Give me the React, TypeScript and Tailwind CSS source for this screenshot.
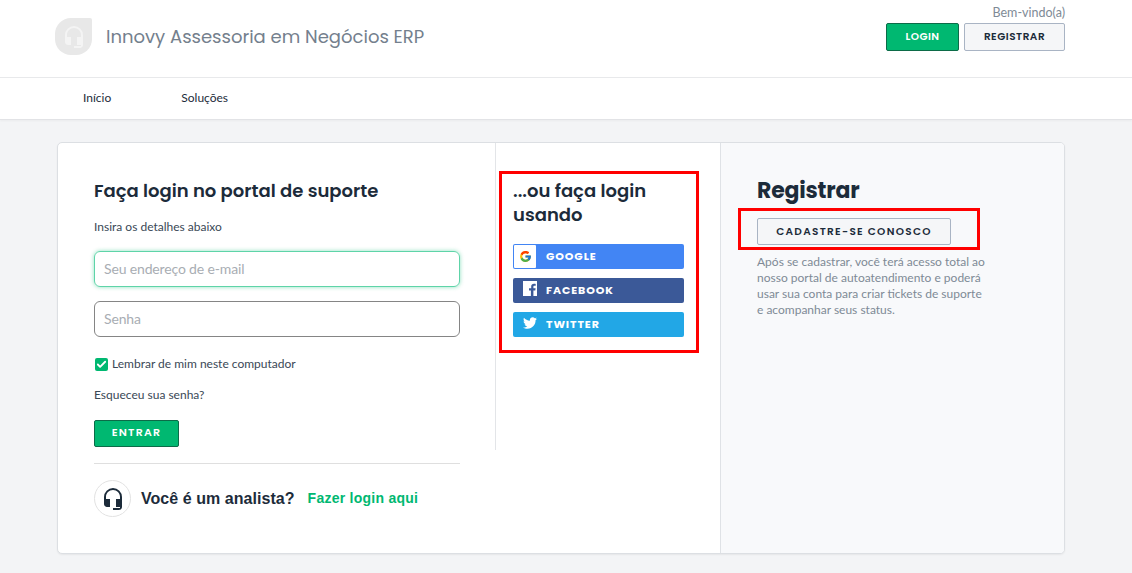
import { FaTwitter } from 'react-icons/fa';
import { FcGoogle } from 'react-icons/fc';
import { MdHeadsetMic } from 'react-icons/md';
import { Check } from 'lucide-react';

const heading = "font-['Poppins','Inter','Liberation_Sans',sans-serif]";
const body = "font-['Source_Sans_Pro','Lato','Noto_Sans',sans-serif]";

function SocialButton({ label, color, icon }: { label: string; color: string; icon: React.ReactNode }) {
  return (
    <div className={`flex h-[25px] items-center rounded-[2px] ${color}`}>
      <div className="flex w-[33px] shrink-0 justify-center">{icon}</div>
      <span className="pb-[1px] text-[11px] font-bold tracking-[0.9px] text-white">{label}</span>
    </div>
  );
}

function FacebookIcon() {
  return (
    <svg viewBox="0 0 14 15" className="mb-[4px] h-[15px] w-[14px]">
      <path fill="#fff" d="M0 0h14v15h-3.6V9.4h1.9l.3-2.2h-2.2V5.8c0-.6.2-1 1.1-1h1.2V2.9c-.2 0-.9-.1-1.7-.1-1.7 0-2.8 1-2.8 2.8v1.6H6v2.2h1.9V15H0z" />
    </svg>
  );
}

export default function App() {
  return (
    <div className={`relative min-h-[573px] overflow-hidden bg-[#f3f4f6] text-[#1c2b3a] ${body}`}>
      <header className="flex h-[78px] items-start justify-between border-b border-[#e8e9eb] bg-white pl-[55px] pr-[67px]">
        <div className="flex items-center pt-[18px]">
          <div className="flex h-[37px] w-[37px] items-center justify-center rounded-[16px] rounded-tr-[2px] bg-[#e8e8e8]">
            <MdHeadsetMic className="h-[24px] w-[24px] text-[#f4f4f4]" />
          </div>
          <span className={`ml-[14px] text-[18px] leading-[37px] text-[#74808d] ${heading}`}>
            Innovy Assessoria em Negócios ERP
          </span>
        </div>
        <div className="flex flex-col items-end pt-[4px]">
          <span className="text-[12.5px] leading-[17px] text-[#7e8a96]">Bem-vindo(a)</span>
          <div className="mt-[2px] flex gap-[5px]">
            <button className={`h-[28px] w-[73px] rounded-[2px] border border-[#0c6b48] bg-[#00b871] text-[10.5px] font-semibold tracking-[0.4px] text-white ${heading}`}>
              LOGIN
            </button>
            <button className={`h-[28px] w-[101px] rounded-[2px] border border-[#a9b4c4] bg-[#f5f6f8] text-[10.5px] font-semibold tracking-[0.5px] text-[#1c2b3a] ${heading}`}>
              REGISTRAR
            </button>
          </div>
        </div>
      </header>

      <nav className="flex h-[42px] items-center gap-[70px] border-b border-[#e2e3e6] bg-white pb-[1px] pl-[83px] text-[12px] shadow-[0_1px_2px_rgba(0,0,0,0.04)]">
        <span>Início</span>
        <span>Soluções</span>
      </nav>

      <main className="mx-[57px] mt-[22px] flex h-[412px] w-[1008px] overflow-hidden rounded-[5px] border border-[#dcdfe3] bg-white shadow-[0_1px_2px_rgba(0,0,0,0.06)]">
        <section className="flex w-[662px] shrink-0 pl-[36px]">
          <div className="w-[366px] shrink-0 pt-[34px]">
            <h2 className={`text-[18px] font-semibold leading-[28px] ${heading}`}>Faça login no portal de suporte</h2>
            <p className="mt-[13px] text-[12px] leading-[18px] text-[#3a4856]">Insira os detalhes abaixo</p>
            <div className="mt-[15px] flex h-[36px] items-center rounded-[6px] border border-[#5ed4a8] px-[9px] pb-[1px] text-[14px] tracking-[-0.15px] text-[#a8adb3] shadow-[0_0_4px_rgba(0,184,113,0.45)]">
              Seu endereço de e-mail
            </div>
            <div className="mt-[14px] flex h-[36px] items-center rounded-[6px] border border-[#858585] px-[9px] pb-[1px] text-[14px] tracking-[-0.15px] text-[#a8adb3]">
              Senha
            </div>
            <label className="mt-[18px] flex items-center text-[12px] leading-[18px] text-[#3a4856]">
              <span className="ml-[1px] flex h-[13px] w-[13px] items-center justify-center rounded-[2px] bg-[#00b871]">
                <Check className="h-[11px] w-[11px] text-white" strokeWidth={4} />
              </span>
              <span className="ml-[4px]">Lembrar de mim neste computador</span>
            </label>
            <p className="mt-[13px] text-[12px] leading-[18px] text-[#3a4856]">Esqueceu sua senha?</p>
            <button className={`mt-[16px] block h-[27px] w-[85px] rounded-[2px] border border-[#0c6b48] bg-[#00b871] pb-[2px] text-[11px] font-semibold tracking-[1.2px] text-white ${heading}`}>
              ENTRAR
            </button>
            <div className="mt-[16px] border-t border-[#dfdfdf]" />
            <div className="mt-[16px] flex items-center">
              <div className="flex h-[37px] w-[37px] items-center justify-center rounded-full border border-[#e2e2e2]">
                <MdHeadsetMic className="h-[24px] w-[24px] text-[#1c2b3a]" />
              </div>
              <span className="ml-[10px] font-['Liberation_Sans',sans-serif] text-[16px] font-bold tracking-[0.05px] text-[#1c2b3a]">Você é um analista?</span>
              <span className="ml-[13px] font-['Liberation_Sans',sans-serif] text-[14px] font-bold tracking-[0.25px] text-[#00b871]">Fazer login aqui</span>
            </div>
          </div>
          <div className="ml-[35px] h-[307px] w-[205px] shrink-0 border-l border-[#e3e5e8] pl-[17px] pr-[16px] pt-[36px]">
            <h2 className={`text-[18px] font-semibold leading-[24px] ${heading}`}>...ou faça login usando</h2>
            <div className={`mt-[17px] flex flex-col gap-[9px] ${heading}`}>
              <SocialButton
                label="GOOGLE"
                color="bg-[#4285f4]"
                icon={
                  <span className="-ml-[9px] flex h-[23px] w-[22px] items-center justify-center rounded-[1px] bg-white">
                    <FcGoogle className="h-[13px] w-[13px]" />
                  </span>
                }
              />
              <SocialButton label="FACEBOOK" color="bg-[#3b5998]" icon={<FacebookIcon />} />
              <SocialButton label="TWITTER" color="bg-[#22a7e6]" icon={<FaTwitter className="mb-[4px] h-[14px] w-[14px] text-white" />} />
            </div>
          </div>
        </section>

        <aside className="flex-1 border-l border-[#dfe2e6] bg-[#f8f9fb] pl-[36px] pt-[32px]">
          <h2 className={`text-[22px] font-bold leading-[32px] tracking-[-0.2px] ${heading}`}>Registrar</h2>
          <button className={`mt-[11px] block h-[27px] w-[194px] rounded-[2px] border border-[#a9b4c4] bg-[#f5f6f8] text-[10.5px] font-semibold tracking-[1.3px] ${heading}`}>
            CADASTRE-SE CONOSCO
          </button>
          <p className="mt-[9px] w-[232px] text-[12px] leading-[16px] text-[#7e8a96]">
            Após se cadastrar, você terá acesso total ao nosso portal de autoatendimento e poderá usar sua conta para criar tickets de suporte e acompanhar seus status.
          </p>
        </aside>
      </main>

      <div className="absolute left-[499px] top-[171px] h-[182px] w-[200px] border-[3px] border-[#ff0000]" />
      <div className="absolute left-[738px] top-[208px] h-[42px] w-[242px] border-[3px] border-[#ff0000]" />
    </div>
  );
}
